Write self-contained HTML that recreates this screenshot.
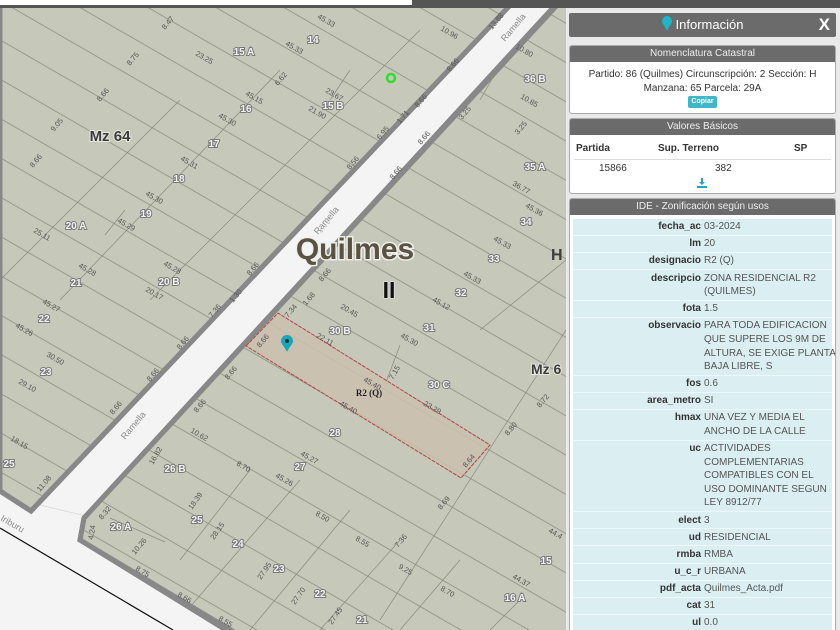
<!DOCTYPE html>
<html><head><meta charset="utf-8"><style>
*{margin:0;padding:0;box-sizing:border-box}
body{width:840px;height:630px;overflow:hidden;background:#e9e9e9;font-family:"Liberation Sans",Arial,sans-serif;position:relative}
#map{position:absolute;left:0;top:0}
#panel{position:absolute;left:566px;top:8px;width:274px;height:622px;background:#e9e9e9;overflow:hidden}
.hdr{position:absolute;left:3px;top:5px;width:267px;height:24px;background:#6b6b6b;color:#fff;font-size:13px;text-align:center;line-height:24px;border-radius:2px}
.hdr .x{position:absolute;right:6px;top:0;font-weight:bold;font-size:17px}
.box{position:absolute;left:3px;width:267px;background:#fff;border:1px solid #aaa;border-radius:3px;overflow:hidden}
.bh{height:16px;background:#6b6b6b;color:#eee;font-size:10px;text-align:center;line-height:16px}
.c{font-size:10px;color:#333;text-align:center}
table{border-collapse:collapse;font-size:10px;color:#333}
.ide{margin:4px 3px 0 3px;width:259px;background:#dbeef2;table-layout:fixed}
.ide td{padding:1.25px 0;line-height:13.6px;vertical-align:top;border-bottom:1px solid #eef7f9;white-space:nowrap}
.ide td.l{text-align:right;font-weight:bold;padding-right:3px;color:#333}
.ide td.v{color:#555}
</style></head><body>
<svg id="map" width="566" height="630" viewBox="0 0 566 630" xmlns="http://www.w3.org/2000/svg" font-family="Liberation Sans, DejaVu Sans, sans-serif">
<defs>
<pattern id="lots" patternUnits="userSpaceOnUse" width="600" height="34" patternTransform="rotate(30)">
<line x1="0" y1="0.5" x2="600" y2="0.5" stroke="#878b7e" stroke-width="0.7"/>
</pattern>
<clipPath id="lb"><polygon points="0,0 515,0 31,511 0,491"/></clipPath>
<clipPath id="rb"><polygon points="560,0 566,0 566,630 234,630 80,540 84,518"/></clipPath>
</defs>
<rect width="566" height="630" fill="#f4f4f4"/>
<line x1="0" y1="528" x2="173" y2="630" stroke="#111" stroke-width="1.2"/>
<line x1="40" y1="505" x2="270" y2="560" stroke="#ddd" stroke-width="1"/>
<polygon points="0,0 515,0 31,511 0,491" fill="#c6c8b9" stroke="#888" stroke-width="5"/>
<polygon points="560,0 570,0 570,635 234,635 80,540 84,518" fill="#c6c8b9" stroke="#888" stroke-width="5"/>
<g clip-path="url(#lb)"><rect width="566" height="630" fill="url(#lots)"/>
<g stroke="#878b7e" stroke-width="0.7">
<line x1="420" y1="30" x2="150" y2="300"/><line x1="280" y1="70" x2="60" y2="300"/><line x1="180" y1="100" x2="0" y2="280"/>
<line x1="125" y1="210" x2="105" y2="235"/><line x1="350" y1="70" x2="330" y2="100"/></g></g>
<g clip-path="url(#rb)"><rect width="566" height="630" fill="url(#lots)" transform="translate(0,10)"/>
<g stroke="#878b7e" stroke-width="0.7">
<line x1="400" y1="345" x2="385" y2="385"/><line x1="566" y1="260" x2="480" y2="330"/>
<line x1="566" y1="330" x2="380" y2="620"/><line x1="520" y1="30" x2="480" y2="100"/>
<line x1="250" y1="470" x2="180" y2="560"/><line x1="300" y1="480" x2="170" y2="630"/>
<line x1="350" y1="510" x2="250" y2="630"/><line x1="400" y1="540" x2="320" y2="630"/>
<line x1="460" y1="560" x2="400" y2="630"/><line x1="520" y1="600" x2="490" y2="630"/>
<line x1="110" y1="518" x2="165" y2="542"/></g></g>
<polyline points="0,491 31,511 515,0" fill="none" stroke="#888" stroke-width="5"/>
<polyline points="560,2 84,518 80,540 234,632" fill="none" stroke="#888" stroke-width="5"/>
<polygon points="246,346 278,313 490,445 461,478" fill="#cbbfae" fill-opacity="0.85" stroke="#b04848" stroke-width="1" stroke-dasharray="4,1"/>
<rect x="0" y="0" width="566" height="8" fill="#555"/>
<rect x="0" y="0" width="412" height="5" fill="#fff"/>
<g font-size="10" font-weight="bold" fill="#f2f2f2" stroke="#7a7a7a" stroke-width="2" paint-order="stroke" text-anchor="middle">
<text x="313" y="43">14</text><text x="244" y="55">15 A</text><text x="246" y="112">16</text><text x="333" y="109">15 B</text>
<text x="214" y="147">17</text><text x="179" y="182">18</text><text x="146" y="217">19</text><text x="76" y="229">20 A</text>
<text x="169" y="285">20 B</text><text x="76" y="286">21</text><text x="44" y="322">22</text><text x="46" y="375">23</text>
<text x="9" y="467">25</text><text x="340" y="334">30 B</text><text x="429" y="331">31</text><text x="439" y="388">30 C</text>
<text x="461" y="296">32</text><text x="494" y="262">33</text><text x="526" y="225">34</text><text x="535" y="170">35 A</text>
<text x="535" y="82">36 B</text><text x="335" y="436">28</text><text x="300" y="470">27</text><text x="175" y="472">26 B</text>
<text x="121" y="530">26 A</text><text x="197" y="523">25</text><text x="238" y="547">24</text><text x="279" y="572">23</text>
<text x="320" y="597">22</text><text x="362" y="623">21</text><text x="546" y="564">15</text><text x="515" y="601">16 A</text>
</g>
<g font-size="7.5" fill="#555">
<text x="317" y="18" transform="rotate(30 317 18)">45.33</text><text x="440" y="30" transform="rotate(30 440 30)">10.96</text>
<text x="285" y="45" transform="rotate(30 285 45)">45.33</text><text x="195" y="55" transform="rotate(30 195 55)">23.25</text>
<text x="245" y="95" transform="rotate(30 245 95)">45.15</text><text x="325" y="92" transform="rotate(30 325 92)">23.67</text>
<text x="308" y="110" transform="rotate(30 308 110)">21.90</text><text x="218" y="117" transform="rotate(30 218 117)">45.30</text>
<text x="180" y="160" transform="rotate(30 180 160)">45.31</text><text x="145" y="195" transform="rotate(30 145 195)">45.30</text>
<text x="117" y="222" transform="rotate(30 117 222)">45.29</text><text x="33" y="232" transform="rotate(30 33 232)">25.11</text>
<text x="78" y="267" transform="rotate(30 78 267)">45.28</text><text x="163" y="265" transform="rotate(30 163 265)">45.28</text>
<text x="145" y="291" transform="rotate(30 145 291)">20.17</text><text x="42" y="303" transform="rotate(30 42 303)">45.27</text>
<text x="15" y="327" transform="rotate(30 15 327)">45.26</text><text x="46" y="356" transform="rotate(30 46 356)">30.50</text>
<text x="18" y="383" transform="rotate(30 18 383)">29.10</text><text x="10" y="440" transform="rotate(30 10 440)">18.15</text>
<text x="340" y="308" transform="rotate(30 340 308)">20.45</text><text x="316" y="337" transform="rotate(30 316 337)">22.11</text>
<text x="400" y="337" transform="rotate(30 400 337)">45.30</text><text x="432" y="301" transform="rotate(30 432 301)">45.12</text>
<text x="463" y="275" transform="rotate(30 463 275)">45.33</text><text x="493" y="240" transform="rotate(30 493 240)">45.33</text>
<text x="512" y="185" transform="rotate(30 512 185)">36.77</text><text x="525" y="207" transform="rotate(30 525 207)">45.36</text>
<text x="363" y="381" transform="rotate(30 363 381)">45.40</text><text x="339" y="405" transform="rotate(30 339 405)">45.40</text>
<text x="423" y="405" transform="rotate(30 423 405)">23.29</text><text x="300" y="455" transform="rotate(30 300 455)">45.27</text>
<text x="275" y="477" transform="rotate(30 275 477)">45.26</text><text x="190" y="432" transform="rotate(30 190 432)">10.62</text>
<text x="236" y="465" transform="rotate(30 236 465)">8.70</text><text x="315" y="515" transform="rotate(30 315 515)">8.50</text>
<text x="355" y="540" transform="rotate(30 355 540)">8.55</text><text x="398" y="568" transform="rotate(30 398 568)">9.25</text>
<text x="440" y="590" transform="rotate(30 440 590)">8.70</text><text x="512" y="578" transform="rotate(30 512 578)">44.37</text>
<text x="135" y="570" transform="rotate(30 135 570)">8.75</text><text x="177" y="596" transform="rotate(30 177 596)">8.66</text>
<text x="218" y="620" transform="rotate(30 218 620)">8.55</text><text x="548" y="532" transform="rotate(30 548 532)">44.4</text>
<text x="515" y="48" transform="rotate(30 515 48)">10.80</text><text x="520" y="98" transform="rotate(30 520 98)">10.85</text>
<g>
<text x="165" y="30" transform="rotate(-50 165 30)">8.47</text><text x="130" y="66" transform="rotate(-50 130 66)">8.75</text>
<text x="100" y="102" transform="rotate(-50 100 102)">8.66</text><text x="54" y="132" transform="rotate(-50 54 132)">9.05</text>
<text x="33" y="168" transform="rotate(-50 33 168)">8.66</text><text x="321" y="233" transform="rotate(-50 321 233)">8.66</text>
<text x="250" y="276" transform="rotate(-50 250 276)">8.66</text><text x="233" y="303" transform="rotate(-50 233 303)">1.30</text>
<text x="212" y="318" transform="rotate(-50 212 318)">7.36</text><text x="180" y="350" transform="rotate(-50 180 350)">8.66</text>
<text x="150" y="382" transform="rotate(-50 150 382)">8.66</text><text x="113" y="415" transform="rotate(-50 113 415)">8.66</text>
<text x="40" y="492" transform="rotate(-50 40 492)">11.08</text><text x="350" y="170" transform="rotate(-50 350 170)">8.56</text>
<text x="380" y="140" transform="rotate(-50 380 140)">6.95</text><text x="400" y="124" transform="rotate(-50 400 124)">1.71</text>
<text x="418" y="108" transform="rotate(-50 418 108)">8.66</text><text x="450" y="72" transform="rotate(-50 450 72)">8.66</text>
<text x="492" y="30" transform="rotate(-50 492 30)">13.88</text><text x="278" y="86" transform="rotate(-50 278 86)">6.62</text>
<text x="322" y="282" transform="rotate(-50 322 282)">8.66</text><text x="306" y="306" transform="rotate(-50 306 306)">1.68</text>
<text x="288" y="318" transform="rotate(-50 288 318)">7.34</text><text x="260" y="348" transform="rotate(-50 260 348)">8.66</text>
<text x="228" y="380" transform="rotate(-50 228 380)">8.66</text><text x="197" y="413" transform="rotate(-50 197 413)">8.66</text>
<text x="393" y="380" transform="rotate(-60 393 380)">7.15</text><text x="466" y="468" transform="rotate(-50 466 468)">8.64</text>
<text x="508" y="436" transform="rotate(-50 508 436)">8.80</text><text x="540" y="408" transform="rotate(-50 540 408)">8.72</text>
<text x="441" y="510" transform="rotate(-50 441 510)">8.69</text><text x="398" y="548" transform="rotate(-50 398 548)">7.36</text>
<text x="421" y="145" transform="rotate(-50 421 145)">8.66</text><text x="393" y="180" transform="rotate(-50 393 180)">8.66</text>
<text x="462" y="120" transform="rotate(-50 462 120)">3.25</text><text x="518" y="135" transform="rotate(-50 518 135)">3.25</text>
<text x="153" y="465" transform="rotate(-60 153 465)">16.82</text><text x="192" y="510" transform="rotate(-55 192 510)">18.39</text>
<text x="214" y="540" transform="rotate(-55 214 540)">28.15</text><text x="261" y="580" transform="rotate(-55 261 580)">27.95</text>
<text x="295" y="605" transform="rotate(-55 295 605)">27.70</text><text x="332" y="625" transform="rotate(-55 332 625)">27.45</text>
<text x="135" y="555" transform="rotate(-50 135 555)">10.26</text><text x="102" y="520" transform="rotate(-50 102 520)">8.32</text>
<text x="93" y="540" transform="rotate(-80 93 540)">4.24</text>
</g></g>
<g font-size="9" fill="#8a8a8a" stroke="#f4f4f4" stroke-width="1.5" paint-order="stroke">
<text x="505" y="42" transform="rotate(-50 505 42)">Ramella</text>
<text x="318" y="235" transform="rotate(-50 318 235)">Ramella</text>
<text x="125" y="440" transform="rotate(-50 125 440)">Ramella</text>
<text x="0" y="520" transform="rotate(30 0 520)">Iriburu</text>
</g>
<text x="110" y="141" font-size="15" font-weight="bold" fill="#3c3c3c" text-anchor="middle" stroke="#e6e6dc" stroke-width="2" paint-order="stroke">Mz 64</text>
<text x="531" y="374" font-size="14" font-weight="bold" fill="#3c3c3c" stroke="#e6e6dc" stroke-width="2" paint-order="stroke">Mz 6</text>
<text x="551" y="260" font-size="16" font-weight="bold" fill="#3c3c3c">H</text>
<text x="355" y="259" font-size="30" font-weight="bold" fill="#5a5242" text-anchor="middle" stroke="#eeeeea" stroke-width="3" paint-order="stroke">Quilmes</text>
<text x="389" y="298" font-size="23" font-weight="bold" fill="#111" text-anchor="middle" stroke="#e0e0e0" stroke-width="1.5" paint-order="stroke">II</text>
<text x="369" y="396" font-size="9" font-weight="bold" fill="#222" text-anchor="middle" font-family="Liberation Serif, serif">R2 (Q)</text>
<circle cx="391" cy="78" r="4" fill="none" stroke="#2de02d" stroke-width="2.5"/>
<path d="M287,352 C284,346 281,344 281,341 A6,6 0 1 1 293,341 C293,344 290,346 287,352Z" fill="#19a7b8"/>
<circle cx="287" cy="341" r="2" fill="#0a3b44"/>
</svg>
<div id="panel">
<div class="hdr"><svg width="10" height="15" viewBox="0 0 10 15" style="vertical-align:-2px;margin-right:4px"><path d="M5,15 C3,10 0,8 0,5 A5,5 0 1 1 10,5 C10,8 7,10 5,15Z" fill="#1fb5c6"/></svg>Información<span class="x">X</span></div>
<div class="box" style="top:37px;height:69px"><div class="bh">Nomenclatura Catastral</div>
<div class="c" style="margin-top:6px;line-height:13.5px">Partido: 86 (Quilmes) Circunscripción: 2 Sección: H<br>Manzana: 65 Parcela: 29A</div>
<div style="margin:1px auto 0;width:29px;height:12px;background:#3fb6c9;color:#fff;font-size:7px;font-weight:bold;text-align:center;line-height:12px;border-radius:2px">Copiar</div></div>
<div class="box" style="top:110px;height:76px"><div class="bh">Valores Básicos</div>
<div style="position:relative;height:58px;font-size:10px;color:#333">
<b style="position:absolute;left:6px;top:8px">Partida</b><b style="position:absolute;left:88px;top:8px">Sup. Terreno</b><b style="position:absolute;left:224px;top:8px">SP</b>
<div style="position:absolute;left:4px;right:4px;top:24px;border-top:1px solid #ddd"></div>
<span style="position:absolute;left:29px;top:28px">15866</span><span style="position:absolute;left:145px;top:28px">382</span>
<svg style="position:absolute;left:127px;top:43px" width="10" height="10" viewBox="0 0 10 10"><path d="M4,0h2v4h2l-3,3l-3,-3h2z M0,8h10v2h-10z" fill="#2a9fc0"/></svg>
</div></div>
<div class="box" style="top:190px;height:440px;border-bottom:none"><div class="bh">IDE - Zonificación según usos</div>
<table class="ide">
<colgroup><col style="width:131px"><col style="width:128px"></colgroup>
<tr><td class="l">fecha_ac</td><td class="v">03-2024</td></tr>
<tr><td class="l">lm</td><td class="v">20</td></tr>
<tr><td class="l">designacio</td><td class="v">R2 (Q)</td></tr>
<tr><td class="l">descripcio</td><td class="v">ZONA RESIDENCIAL R2<br>(QUILMES)</td></tr>
<tr><td class="l">fota</td><td class="v">1.5</td></tr>
<tr><td class="l">observacio</td><td class="v">PARA TODA EDIFICACION<br>QUE SUPERE LOS 9M DE<br>ALTURA, SE EXIGE PLANTA<br>BAJA LIBRE, S</td></tr>
<tr><td class="l">fos</td><td class="v">0.6</td></tr>
<tr><td class="l">area_metro</td><td class="v">SI</td></tr>
<tr><td class="l">hmax</td><td class="v">UNA VEZ Y MEDIA EL<br>ANCHO DE LA CALLE</td></tr>
<tr><td class="l">uc</td><td class="v">ACTIVIDADES<br>COMPLEMENTARIAS<br>COMPATIBLES CON EL<br>USO DOMINANTE SEGUN<br>LEY 8912/77</td></tr>
<tr><td class="l">elect</td><td class="v">3</td></tr>
<tr><td class="l">ud</td><td class="v">RESIDENCIAL</td></tr>
<tr><td class="l">rmba</td><td class="v">RMBA</td></tr>
<tr><td class="l">u_c_r</td><td class="v">URBANA</td></tr>
<tr><td class="l">pdf_acta</td><td class="v">Quilmes_Acta.pdf</td></tr>
<tr><td class="l">cat</td><td class="v">31</td></tr>
<tr><td class="l">ul</td><td class="v">0.0</td></tr>
</table></div>
</div>
<div style="position:absolute;left:566px;top:0;width:274px;height:8px;background:#555"></div>
</body></html>
